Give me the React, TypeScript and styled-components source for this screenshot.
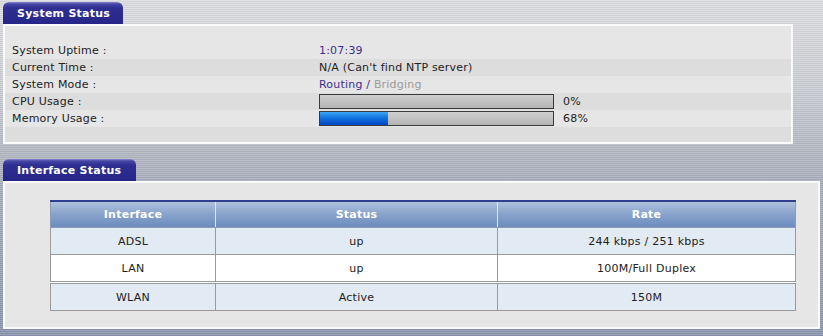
import styled, { createGlobalStyle } from "styled-components";

const GlobalStyle = createGlobalStyle`
  html, body {
    margin: 0;
    padding: 0;
  }
  body {
    width: 823px;
    height: 336px;
    overflow: hidden;
    font-family: "DejaVu Sans", Verdana, sans-serif;
    font-size: 11px;
    background:
      repeating-linear-gradient(
        to bottom,
        rgba(255, 255, 255, 0.16) 0px,
        rgba(255, 255, 255, 0.16) 1px,
        rgba(0, 0, 0, 0.04) 1px,
        rgba(0, 0, 0, 0.04) 2px
      ),
      linear-gradient(to bottom, #dcdde0 0px, #c9ccd2 90px, #a7adba 180px, #98a1b3 260px, #8894ad 336px);
  }
`;

const Page = styled.div`
  display: flex;
  flex-direction: column;
  gap: 15px;
  padding: 2px 0 0 3px;
`;

const Section = styled.section`
  display: flex;
  flex-direction: column;
`;

const Tab = styled.div<{ $width: number }>`
  width: ${(p) => p.$width}px;
  height: 22px;
  box-sizing: border-box;
  padding-left: 14px;
  display: flex;
  align-items: center;
  border-radius: 6px 6px 0 0;
  background: linear-gradient(to bottom, #8a8ad0 0px, #4646a6 2px, #2f2f92 6px, #26268a 100%);
  color: #fff;
  font-weight: bold;
  font-size: 11px;
  letter-spacing: 0.25px;
`;

const Panel = styled.div<{ $width: number }>`
  width: ${(p) => p.$width}px;
  box-sizing: border-box;
  border: 2px solid #fafafa;
  background: #e6e6e6;
`;

const StatusList = styled.div`
  padding: 16px 0 0 0;
`;

const Row = styled.div<{ $shade: boolean; $filler?: boolean }>`
  display: grid;
  grid-template-columns: 307px 1fr;
  align-items: center;
  height: ${(p) => (p.$filler ? 15 : 17)}px;
  padding-left: 7px;
  background: ${(p) => (p.$shade ? "#dddddd" : "#e6e6e6")};
  color: #222;
  letter-spacing: 0.2px;
`;

const Value = styled.span<{ $tone?: "accent" | "muted" | "plain" }>`
  color: ${(p) =>
    p.$tone === "accent" ? "#3b2f8f" : p.$tone === "muted" ? "#9a9a9a" : "#222"};
`;

const BarLine = styled.div`
  display: flex;
  align-items: center;
  gap: 9px;
`;

const Bar = styled.div`
  width: 235px;
  height: 15px;
  box-sizing: border-box;
  border: 1px solid #3a3a3a;
  background: linear-gradient(to bottom, #cfcfcf, #b4b4b4);
  display: flex;
`;

const BarFill = styled.div`
  height: 100%;
  background: linear-gradient(to bottom, #3fa6f4 0%, #1173e0 45%, #0346c4 100%);
`;

const TablePanel = styled.div`
  padding: 17px 21px 16px 45px;
`;

const Table = styled.table`
  width: 746px;
  border-collapse: collapse;
  text-align: center;
  color: #222;
  font-size: 11px;
  letter-spacing: 0.25px;
`;

const Th = styled.th`
  height: 25px;
  padding: 0;
  border-top: 2px solid #2d3f8e;
  border-left: 1px solid #dfe6f0;
  border-right: 1px solid #dfe6f0;
  border-bottom: 1px solid #8e9bb0;
  background: linear-gradient(to bottom, #afc2dc 0%, #8aa4cc 45%, #6c8cbe 100%);
  color: #fff;
  font-weight: bold;
  &:first-child { border-left: 1px solid #8e9bb0; }
  &:last-child { border-right: 1px solid #8e9bb0; }
`;

const Tr = styled.tr<{ $alt: boolean; $split?: boolean }>`
  background: ${(p) => (p.$alt ? "#ffffff" : "#e2eaf3")};
  td {
    border-top: ${(p) => (p.$split ? "3px double #9a9a9a" : "1px solid #9a9a9a")};
  }
`;

const Td = styled.td`
  height: 26px;
  padding: 0;
  border: 1px solid #9a9a9a;
`;

const interfaces = [
  { name: "ADSL", status: "up", rate: "244 kbps / 251 kbps" },
  { name: "LAN", status: "up", rate: "100M/Full Duplex" },
  { name: "WLAN", status: "Active", rate: "150M" },
];

export default function App() {
  return (
    <>
      <GlobalStyle />
      <Page>
        <Section>
          <Tab $width={120}>System Status</Tab>
          <Panel $width={790}>
            <StatusList>
              <Row $shade={false}>
                <span>System Uptime :</span>
                <Value $tone="accent">1:07:39</Value>
              </Row>
              <Row $shade>
                <span>Current Time :</span>
                <Value>N/A (Can't find NTP server)</Value>
              </Row>
              <Row $shade={false}>
                <span>System Mode :</span>
                <span>
                  <Value $tone="accent">Routing / </Value>
                  <Value $tone="muted">Bridging</Value>
                </span>
              </Row>
              <Row $shade>
                <span>CPU Usage :</span>
                <BarLine>
                  <Bar>
                    <BarFill style={{ width: "0px" }} />
                  </Bar>
                  <span>0%</span>
                </BarLine>
              </Row>
              <Row $shade={false}>
                <span>Memory Usage :</span>
                <BarLine>
                  <Bar>
                    <BarFill style={{ width: "68px" }} />
                  </Bar>
                  <span>68%</span>
                </BarLine>
              </Row>
              <Row $shade $filler>
                <span />
                <span />
              </Row>
            </StatusList>
          </Panel>
        </Section>
        <Section>
          <Tab $width={133}>Interface Status</Tab>
          <Panel $width={817}>
            <TablePanel>
              <Table>
                <thead>
                  <tr>
                    <Th style={{ width: "164px" }}>Interface</Th>
                    <Th style={{ width: "281px" }}>Status</Th>
                    <Th>Rate</Th>
                  </tr>
                </thead>
                <tbody>
                  {interfaces.map((it, i) => (
                    <Tr key={it.name} $alt={i % 2 === 1} $split={i === 2}>
                      <Td>{it.name}</Td>
                      <Td>{it.status}</Td>
                      <Td>{it.rate}</Td>
                    </Tr>
                  ))}
                </tbody>
              </Table>
            </TablePanel>
          </Panel>
        </Section>
      </Page>
    </>
  );
}
